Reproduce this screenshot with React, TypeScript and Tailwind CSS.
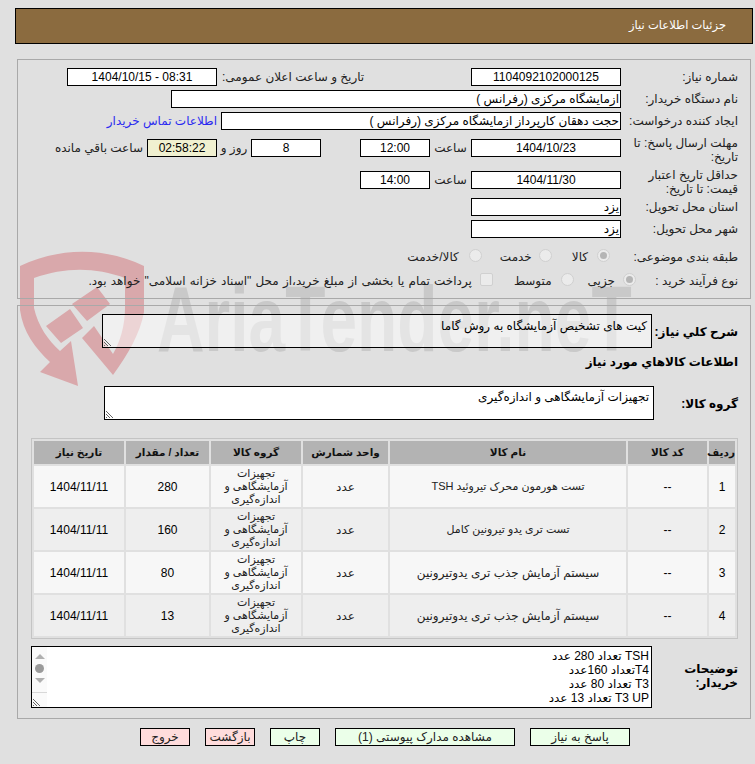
import React from "react";

/* ---------- data ---------- */

const rows = [
  { id: "1", name: "تست هورمون محرک تیروئید TSH", qty: "280", size: "text-[11px]" },
  { id: "2", name: "تست تری یدو تیرونین کامل", qty: "160", size: "text-[11px]" },
  { id: "3", name: "سیستم آزمایش جذب تری یدوتیرونین", qty: "80", size: "text-[12px]" },
  { id: "4", name: "سیستم آزمایش جذب تری یدوتیرونین", qty: "13", size: "text-[12px]" },
];

const headers = ["رديف", "کد کالا", "نام کالا", "واحد شمارش", "گروه کالا", "تعداد / مقدار", "تاریخ نیاز"];

/* ---------- small parts ---------- */

function Field({ w, children, center = true, bg = "bg-white" }: { w: string; children?: React.ReactNode; center?: boolean; bg?: string }) {
  return (
    <div className={`${w} h-[18px] shrink-0 border border-black ${bg} leading-[16px] whitespace-nowrap overflow-hidden ${center ? "text-center" : "text-right pr-[1px]"}`}>
      {children}
    </div>
  );
}

function Label({ children }: { children: React.ReactNode }) {
  return <div className="w-[117px] shrink-0 leading-[14px] text-[#222]">{children}</div>;
}

function Radio({ checked = false }: { checked?: boolean }) {
  return (
    <span className="w-[13px] h-[13px] shrink-0 rounded-full border border-[#d0d0d0] bg-[#ebebeb] flex items-center justify-center -mt-[3px]">
      {checked && <span className="w-[7px] h-[7px] rounded-full bg-[#b5b5b5]" />}
    </span>
  );
}

function Grip() {
  return (
    <svg className="absolute left-0 bottom-0" width="9" height="9" viewBox="0 0 9 9">
      <path d="M1 1 L8 8 M1 4 L5 8 M1 7 L2 8" stroke="#666" strokeWidth="1" fill="none" />
    </svg>
  );
}

function Btn({ w, pink = false, children }: { w: string; pink?: boolean; children: React.ReactNode }) {
  return (
    <div className={`${w} h-[18px] border border-black text-center leading-[16px] text-[#222] ${pink ? "bg-[#ffdcdc]" : "bg-[#ebffe9]"}`}>
      {children}
    </div>
  );
}

function Watermark() {
  return (
    <div className="absolute left-[20px] top-[250px] w-[610px] h-[140px] pointer-events-none" dir="ltr">
      <svg className="absolute left-0 top-0" width="125" height="140" viewBox="0 0 125 140">
        <path d="M0 16 C40 -3 85 -3 124 16 L124 62 C120 84 108 104 93 125 L62 88 L74 76 L93 104 C100 92 105 76 105 58 L105 28 C75 17 45 17 14 28 L14 58 C18 76 28 90 40 101 L51 91 L58 136 L20 122 L30 112 C15 98 3 82 0 60 Z" fill="#d9a8ab" />
        <path d="M26 76 L50 59 L63 78 L41 93 Z M52 54 L77 37 L90 54 L67 71 Z" fill="#d9a8ab" />
      </svg>
      <div className="absolute left-[137px] top-[24px] h-[90px] text-[#c9c9c9] text-[92px] leading-[90px] font-bold whitespace-nowrap origin-left scale-x-[0.716] font-['Liberation_Sans',sans-serif]">
        AriaTender.neT
      </div>
    </div>
  );
}

/* ---------- main ---------- */

export default function App() {
  return (
    <div dir="rtl" className="relative w-[755px] h-[764px] overflow-hidden bg-[#e0e0e0] text-[12px] text-black font-['Liberation_Sans','DejaVu_Sans',sans-serif]">
      <Watermark />

      <div className="relative pt-[8px] pr-[2px] pl-[15px]">
        {/* header */}
        <div className="h-[36px] border border-black bg-[#8b6b3f] text-white flex items-center pr-[26px] text-[11.5px]">
          جزئیات اطلاعات نیاز
        </div>

        {/* first panel */}
        <div className="mt-[15px] ml-[2px] mr-[2px] h-[240px] border border-[#a9a9a9] pt-[8px] pr-[12px]">
          <div className="flex items-center">
            <Label>شماره نیاز:</Label>
            <Field w="w-[150px]">1104092102000125</Field>
            <div className="w-[254px] pl-[5px] text-left text-[#222]">تاریخ و ساعت اعلان عمومی:</div>
            <Field w="w-[150px]">08:31 - 1404/10/15</Field>
          </div>
          <div className="flex items-center mt-[4px]">
            <Label>نام دستگاه خریدار:</Label>
            <Field w="w-[450px]" center={false}>ازمایشگاه مرکزی (رفرانس )</Field>
          </div>
          <div className="flex items-center mt-[4px]">
            <Label>ایجاد کننده درخواست:</Label>
            <Field w="w-[400px]" center={false}>حجت دهقان کارپرداز ازمایشگاه مرکزی (رفرانس )</Field>
            <div className="mr-[4px] text-[#2a2af0] whitespace-nowrap">اطلاعات تماس خریدار</div>
          </div>
          <div className="flex items-start mt-[6px] h-[32px]">
            <Label>مهلت ارسال پاسخ: تا تاریخ:</Label>
            <div className="flex items-center mt-[3px]">
              <Field w="w-[150px]">1404/10/23</Field>
              <div className="w-[41px] text-center text-[#222]">ساعت</div>
              <Field w="w-[70px]">12:00</Field>
              <div className="w-[39px]" />
              <Field w="w-[70px]">8</Field>
              <div className="w-[34px] text-center text-[#222] whitespace-nowrap">روز و</div>
              <Field w="w-[70px]" bg="bg-[#f0f0d0]">02:58:22</Field>
              <div className="mr-[4px] text-[#222] whitespace-nowrap">ساعت باقي مانده</div>
            </div>
          </div>
          <div className="flex items-start h-[30px]">
            <Label>حداقل تاریخ اعتبار قیمت: تا تاریخ:</Label>
            <div className="flex items-center mt-[3px]">
              <Field w="w-[150px]">1404/11/30</Field>
              <div className="w-[41px] text-center text-[#222]">ساعت</div>
              <Field w="w-[70px]">14:00</Field>
            </div>
          </div>
          <div className="flex items-center">
            <Label>استان محل تحویل:</Label>
            <Field w="w-[150px]" center={false}>یزد</Field>
          </div>
          <div className="flex items-center mt-[4px]">
            <Label>شهر محل تحویل:</Label>
            <Field w="w-[150px]" center={false}>یزد</Field>
          </div>
          <div className="flex items-center mt-[11px] h-[16px] text-[#222]">
            <Label>طبقه بندی موضوعی:</Label>
            <div className="flex items-center gap-[9px] pr-[11px]">
              <Radio checked />
              <span className="whitespace-nowrap">کالا</span>
            </div>
            <div className="flex items-center gap-[7px] mr-[20px]">
              <Radio />
              <span className="whitespace-nowrap">خدمت</span>
            </div>
            <div className="flex items-center gap-[10px] mr-[18px]">
              <Radio />
              <span className="whitespace-nowrap">کالا/خدمت</span>
            </div>
          </div>
          <div className="flex items-center mt-[8px] h-[16px] text-[#222]">
            <div className="w-[102px] shrink-0">نوع فرآیند خرید :</div>
            <div className="flex items-center gap-[8px]">
              <Radio checked />
              <span className="whitespace-nowrap">جزیی</span>
            </div>
            <div className="flex items-center gap-[9px] mr-[14px]">
              <Radio />
              <span className="whitespace-nowrap">متوسط</span>
            </div>
            <div className="flex items-center gap-[8px] mr-[21px] whitespace-nowrap">
              <span className="w-[13px] h-[13px] shrink-0 border border-[#d0d0d0] bg-[#ebebeb] rounded-[2px] -mt-[3px]" />
              <span className="[word-spacing:0.8px]">پرداخت تمام یا بخشی از مبلغ خرید،از محل "اسناد خزانه اسلامی" خواهد بود.</span>
            </div>
          </div>
        </div>

        {/* second panel */}
        <div className="mt-[6px] ml-[2px] mr-[2px] h-[414px] border border-[#a9a9a9] pr-[12px] pt-[8px]">
          <div className="flex">
            <div className="w-[86px] shrink-0 pt-[10px] font-bold leading-[16px] whitespace-nowrap">شرح کلي نیاز:</div>
            <div className="relative w-[550px] h-[34px] border border-black bg-white/50 px-[4px] pt-[3px] leading-[16px]">
              کیت های تشخیص آزمایشگاه به روش گاما
              <Grip />
            </div>
          </div>
          <div className="mt-[6px] h-[24px] font-bold leading-[16px]">اطلاعات کالاهاي مورد نیاز</div>
          <div className="flex mt-[8px]">
            <div className="w-[84px] shrink-0 pt-[10px] font-bold leading-[16px]">گروه کالا:</div>
            <div className="relative w-[550px] h-[34px] border border-black bg-white px-[4px] pt-[2px] leading-[16px]">
              تجهیزات آزمایشگاهی و اندازه‌گیری
              <Grip />
            </div>
          </div>

          {/* items table */}
          <table className="mt-[18px] w-[707px] table-fixed border-separate border-spacing-[2px] border border-[#c4c4c4] text-center">
            <colgroup>
              <col className="w-[26px]" />
              <col className="w-[79px]" />
              <col className="w-[236px]" />
              <col className="w-[85px]" />
              <col className="w-[90px]" />
              <col className="w-[83px]" />
              <col />
            </colgroup>
            <thead>
              <tr>
                {headers.map((h) => (
                  <th key={h} className="h-[23px] p-0 bg-[#b3b3b3] font-bold text-[10.5px] text-[#111] whitespace-nowrap">{h}</th>
                ))}
              </tr>
            </thead>
            <tbody>
              {rows.map((r, i) => (
                <tr key={r.id} className={i % 2 === 0 ? "bg-[#f7f7f7]" : "bg-[#eeeeee]"}>
                  <td className="h-[41px] p-0">{r.id}</td>
                  <td className="p-0">--</td>
                  <td className={`p-0 text-[#222] ${r.size}`}>{r.name}</td>
                  <td className="p-0 text-[#222]">عدد</td>
                  <td className="p-0 text-[#222] leading-[13px] text-[11px]">تجهیزات آزمایشگاهی و اندازه‌گیری</td>
                  <td className="p-0">{r.qty}</td>
                  <td className="p-0">1404/11/11</td>
                </tr>
              ))}
            </tbody>
          </table>

          {/* buyer notes */}
          <div className="flex mt-[7px]">
            <div className="w-[86px] shrink-0 pt-[16px] pl-[20px] font-bold leading-[14px]">توضیحات خریدار:</div>
            <div className="w-[621px] h-[62px] border border-black bg-white flex justify-between leading-[14px]">
              <div className="pr-[2px] pt-[2px]">
                <div>TSH تعداد 280 عدد</div>
                <div>T4تعداد 160عدد</div>
                <div>T3 تعداد 80 عدد</div>
                <div>T3 UP تعداد 13 عدد</div>
              </div>
              <div className="relative w-[15px] bg-[#fafafa] flex flex-col items-center pt-[7px] gap-[5px]">
                <span className="w-0 h-0 border-x-[5px] border-x-transparent border-b-[5px] border-b-[#b0b0b0]" />
                <span className="w-[9px] h-[9px] rounded-full bg-[#9a9a9a]" />
                <span className="w-0 h-0 border-x-[5px] border-x-transparent border-t-[5px] border-t-[#b0b0b0]" />
                <span className="absolute left-0 right-0 bottom-[14px] border-t border-[#d8d8d8]" />
                <Grip />
              </div>
            </div>
          </div>
        </div>

        {/* actions */}
        <div className="mt-[9px] pr-[123px] flex gap-[15px]">
          <Btn w="w-[100px]">پاسخ به نیاز</Btn>
          <Btn w="w-[180px]">مشاهده مدارک پیوستی (1)</Btn>
          <Btn w="w-[50px]">چاپ</Btn>
          <Btn w="w-[50px]" pink>بازگشت</Btn>
          <Btn w="w-[50px]" pink>خروج</Btn>
        </div>
      </div>
    </div>
  );
}
